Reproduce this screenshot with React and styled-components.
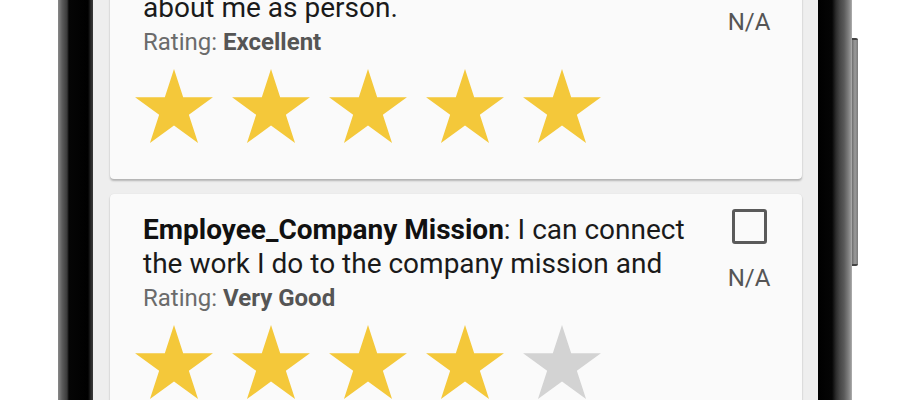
import React from 'react';
import styled, { createGlobalStyle } from 'styled-components';

const GlobalStyle = createGlobalStyle`
  html, body {
    margin: 0;
    padding: 0;
    background: #ffffff;
    overflow: hidden;
  }
  body {
    font-family: Roboto, "Noto Sans", Arial, sans-serif;
  }
`;

const Page = styled.div`
  width: 920px;
  height: 400px;
  display: flex;
  padding-left: 58px;
  box-sizing: border-box;
  overflow: hidden;
`;

const LeftBezel = styled.div`
  width: 35px;
  flex-shrink: 0;
  background: linear-gradient(
    to right,
    #8a8a8a 0px,
    #5c5c5c 4px,
    #3a3a3a 9px,
    #050505 11px,
    #000000 30px,
    #2a2a2a 33px,
    #3c3c3c 35px
  );
`;

const RightBezel = styled.div`
  width: 34px;
  flex-shrink: 0;
  background: linear-gradient(
    to right,
    #000000 0px,
    #050505 14px,
    #2c2c2c 18px,
    #474747 22px,
    #5a5a5a 26px,
    #7b7b7b 30px,
    #9a9a9a 33px,
    #b5b5b5 34px
  );
`;

const SideButton = styled.div`
  align-self: flex-start;
  margin-top: 38px;
  width: 6px;
  height: 224px;
  background: linear-gradient(to right, #6e6e6e, #9b9b9b 50%, #7a7a7a);
  border-radius: 0 2px 2px 0;
  border-top: 2px solid #444;
  border-bottom: 2px solid #444;
`;

const Screen = styled.div`
  width: 725px;
  flex-shrink: 0;
  background: #eeeeee;
  padding: 0 16px 0 17px;
  box-sizing: border-box;
  overflow: hidden;
`;

const CardList = styled.div`
  display: flex;
  flex-direction: column;
  gap: 15px;
  margin-top: -62px;
`;

const Card = styled.div`
  background: #fafafa;
  border-radius: 4px;
  box-shadow: 0 2px 2px rgba(0, 0, 0, 0.24), 0 0 1px rgba(0, 0, 0, 0.12);
  padding: 19px 23px 36px 25px;
  display: grid;
  grid-template-columns: 1fr 60px;
  column-gap: 16px;
`;

const Body = styled.div`
  display: flex;
  flex-direction: column;
  min-width: 0;
`;

const Question = styled.p`
  margin: 0 0 0 8px;
  font-size: 28px;
  line-height: 34px;
  color: #1a1a1a;
  b {
    font-weight: 700;
    color: #111;
  }
`;

const Rating = styled.div`
  margin: 3px 0 0 8px;
  font-size: 24px;
  line-height: 28px;
  color: #6b6b6b;
  b {
    font-weight: 700;
    color: #555555;
  }
`;

const Stars = styled.div`
  display: flex;
  gap: 19px;
  margin-top: 13px;
`;

const StarIcon = styled.svg`
  width: 78px;
  height: 74px;
  display: block;
  fill: ${p => (p.$on ? '#f4c83a' : '#d3d3d3')};
`;

const Side = styled.div`
  display: flex;
  flex-direction: column;
  align-items: center;
  margin-top: -4px;
`;

const Checkbox = styled.div`
  width: 35px;
  height: 35px;
  box-sizing: border-box;
  border: 3px solid #5a5a5a;
  border-radius: 3px;
`;

const NA = styled.div`
  margin-top: 20px;
  font-size: 24px;
  line-height: 28px;
  color: #555555;
  white-space: nowrap;
`;

const Star = ({ on }) => (
  <StarIcon $on={on} viewBox="0 0 100 95.1">
    <polygon points="50,0 61.8,36.3 100,36.3 69.1,58.8 80.9,95.1 50,72.7 19.1,95.1 30.9,58.8 0,36.3 38.2,36.3" />
  </StarIcon>
);

const items = [
  {
    title: 'Employee_Manager Care',
    text: 'My manager cares about me as person.',
    rating: 'Excellent',
    stars: 5,
  },
  {
    title: 'Employee_Company Mission',
    text: 'I can connect the work I do to the company mission and',
    rating: 'Very Good',
    stars: 4,
  },
];

const App = () => (
  <>
    <GlobalStyle />
    <Page>
      <LeftBezel />
      <Screen>
        <CardList>
          {items.map(item => (
            <Card key={item.title}>
              <Body>
                <Question>
                  <b>{item.title}</b>: {item.text}
                </Question>
                <Rating>
                  Rating: <b>{item.rating}</b>
                </Rating>
                <Stars>
                  {[1, 2, 3, 4, 5].map(n => (
                    <Star key={n} on={n <= item.stars} />
                  ))}
                </Stars>
              </Body>
              <Side>
                <Checkbox />
                <NA>N/A</NA>
              </Side>
            </Card>
          ))}
        </CardList>
      </Screen>
      <RightBezel />
      <SideButton />
    </Page>
  </>
);

export default App;
